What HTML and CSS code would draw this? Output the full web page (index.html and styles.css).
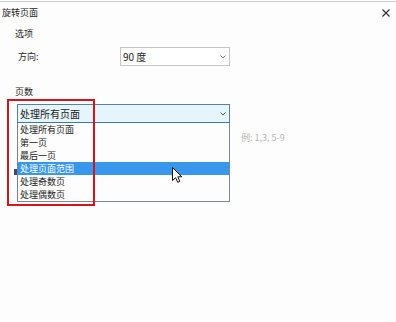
FILE: index.html
```html
<!DOCTYPE html>
<html lang="zh-CN">
<head>
  <meta charset="UTF-8">
  <title>旋转页面</title>
  <link rel="stylesheet" href="styles.css">
</head>
<body>

  <div class="dialog">
    <div class="titlebar">
      <span class="title">旋转页面</span>
      <svg class="close" width="8" height="8" viewBox="0 0 8 8">
        <path d="M0.5 0.5 L7.5 7.5 M7.5 0.5 L0.5 7.5" stroke="#2b2b2b" stroke-width="1.1" fill="none"/>
      </svg>
    </div>

    <div class="group-title">选项</div>

    <div class="field">
      <span class="field-label">方向:</span>
      <div class="combo">
        <span>90 度</span>
        <svg class="chevron" width="6" height="4" viewBox="0 0 6 4"><path d="M0.5 0.5 L3 3 L5.5 0.5" stroke="#777" fill="none"/></svg>
      </div>
    </div>

    <div class="group-title pages-title">页数</div>

    <div class="pages">
      <div class="combo combo-open">
        <span>处理所有页面</span>
        <svg class="chevron" width="6" height="4" viewBox="0 0 6 4"><path d="M0.5 0.5 L3 3 L5.5 0.5" stroke="#555" fill="none"/></svg>
      </div>
      <span class="radio-peek"></span>
      <span class="hint">例: 1,3, 5-9</span>
      <ul class="dropdown">
        <li>处理所有页面</li>
        <li>第一页</li>
        <li>最后一页</li>
        <li class="selected">处理页面范围</li>
        <li>处理奇数页</li>
        <li>处理偶数页</li>
      </ul>
    </div>

    <!-- red annotation box drawn over the screenshot -->
    <div class="annotation"></div>

    <svg class="cursor" width="11" height="17" viewBox="0 0 11 17">
      <path d="M0.5 0.5 L0.5 13.5 L3.6 10.6 L5.7 15.3 L7.8 14.4 L5.8 9.8 L9.8 9.8 Z" fill="#fff" stroke="#111" stroke-width="1"/>
    </svg>
  </div>

</body>
</html>
```

FILE: styles.css
```css
html, body {
  margin: 0;
  padding: 0;
  background: #fdfdfd;
}
body {
  font-family: "Noto Sans CJK SC", "Noto Sans", sans-serif;
  color: #1c1c1c;
}
.dialog {
  position: relative;
  width: 396px;
  height: 321px;
  margin-top: 1px;
  border-top: 1px solid #c9cdd0;
  overflow: hidden;
}
.titlebar {
  display: flex;
  justify-content: space-between;
  align-items: flex-start;
  padding: 5px 6px 0 2px;
}
.title {
  font-size: 9px;
  line-height: 12px;
}
.close {
  margin-top: 2px;
}
.group-title {
  margin-top: 9px;
  padding-left: 15px;
  font-size: 9px;
  line-height: 12px;
}
.field {
  display: flex;
  align-items: center;
  margin-top: 7px;
  padding-left: 18px;
}
.field-label {
  width: 102px;
  font-size: 9px;
  line-height: 12px;
  padding-top: 1px;
}
.combo {
  display: flex;
  align-items: center;
  justify-content: space-between;
  box-sizing: border-box;
  width: 110px;
  height: 19px;
  padding: 0 3px 0 2px;
  background: #fff;
  border: 1px solid #c6c6c6;
  font-size: 10px;
  line-height: 12px;
}
.pages-title {
  margin-top: 20px;
}
.pages {
  position: relative;
  margin-top: 6px;
  margin-left: 17px;
}
.combo-open {
  width: 213px;
  background: #e6f4fc;
  border-color: #58809f;
  border-bottom-color: #3a78b0;
}
.dropdown {
  position: absolute;
  left: 0;
  top: 19px;
  box-sizing: border-box;
  width: 213px;
  margin: 0;
  padding: 0;
  list-style: none;
  background: #fdfdfd;
  border: 1px solid #7d8690;
  border-top: none;
}
.dropdown li {
  height: 13px;
  padding-left: 2px;
  font-size: 9px;
  line-height: 13px;
}
.dropdown .selected {
  background: #3897ea;
  color: #fff;
}
.hint {
  position: absolute;
  left: 224px;
  top: 28px;
  font-size: 9px;
  line-height: 12px;
  color: #b4b4b4;
  white-space: nowrap;
}
.radio-peek {
  position: absolute;
  left: -3px;
  top: 65px;
  width: 3px;
  height: 6px;
  background: #2d4f86;
}
.annotation {
  position: absolute;
  left: 7px;
  top: 97px;
  width: 84px;
  height: 103px;
  border: 2px solid #d7141b;
}
.cursor {
  position: absolute;
  left: 172px;
  top: 165px;
}
```
